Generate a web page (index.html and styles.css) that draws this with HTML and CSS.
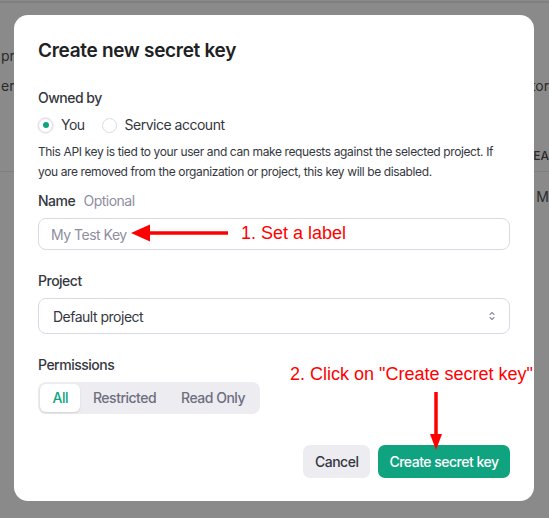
FILE: index.html
```html
<!doctype html>
<html>
<head>
  <title>Create new secret key</title>
  <link rel="stylesheet" href="styles.css">
</head>
<body>
<div class="page">
	<div class="page-row row-1"><span class="cut-left">pr</span></div>
	<div class="page-row row-2"><span class="cut-left">er c</span><span class="cut-right">tor</span></div>
	<div class="page-row row-3"><span></span><span class="cut-right caps">EA</span></div>
	<div class="page-row row-4"><span></span><span class="cut-right">M</span></div>
</div>

<div class="modal">
	<h2 class="modal-title">Create new secret key</h2>

	<div class="field field-owner">
		<div class="label">Owned by</div>
		<div class="radios">
			<label class="radio"><span class="dot checked"></span>You</label>
			<label class="radio"><span class="dot"></span>Service account</label>
		</div>
		<p class="hint">This API key is tied to your user and can make requests against the selected project. If you are removed from the organization or project, this key will be disabled.</p>
	</div>

	<div class="field">
		<div class="label">Name <span class="optional">Optional</span></div>
		<div class="input placeholder">My Test Key</div>
	</div>

	<div class="field">
		<div class="label">Project</div>
		<div class="input select">
			<span>Default project</span>
			<svg width="8" height="12" viewBox="0 0 8 12"><path d="M2 4.5 L4 2.5 L6 4.5 M2 7.5 L4 9.5 L6 7.5" fill="none" stroke="#8e8ea0" stroke-width="1.1" stroke-linecap="round" stroke-linejoin="round"/></svg>
		</div>
	</div>

	<div class="field">
		<div class="label">Permissions</div>
		<div class="segments">
			<span class="seg active">All</span>
			<span class="seg">Restricted</span>
			<span class="seg">Read Only</span>
		</div>
	</div>

	<div class="actions">
		<button class="btn btn-cancel">Cancel</button>
		<button class="btn btn-primary">Create secret key</button>
	</div>

	<!-- annotations -->
	<svg class="arrow-left" width="98" height="20" viewBox="0 0 98 20"><path d="M16 10 H97" stroke="#ff0000" stroke-width="3.5"/><path d="M0 10 L19 1.5 L19 18.5 Z" fill="#ff0000"/></svg>
	<div class="note note-1">1. Set a label</div>
	<div class="note note-2">2. Click on "Create secret key"</div>
	<svg class="arrow-down" width="14" height="58" viewBox="0 0 14 58"><path d="M7 0 V46" stroke="#ff0000" stroke-width="3.5"/><path d="M7 58 L1 42 L13 42 Z" fill="#ff0000"/></svg>
</div>
</body>
</html>
```

FILE: styles.css
```css
*,
*:before,
*:after {
	box-sizing: border-box;
}

body {
	margin: 0;
	background-color: #8a8a8a;
	font-family: "Inter", "Noto Sans", sans-serif;
	color: #202123;
	height: 518px;
	overflow: hidden;
	position: relative;
}

/* dimmed page behind the dialog */
.page {
	border-top: 2px solid #7f7f7f;
	margin-top: 1px;
	font-size: 14px;
	line-height: 24px;
	color: #2b2b2b;
}
.page-row {
	display: flex;
	justify-content: space-between;
	height: 24px;
}
.row-1 { margin-top: 41px; }
.row-2 { margin-top: 6px; }
.row-3 {
	margin-top: 46px;
	padding-bottom: 3px;
	border-bottom: 1px solid #7f7f7f;
	box-sizing: content-box;
}
.row-4 { margin-top: 13px; }
.cut-left { margin-left: 1px; }
.caps { font-size: 12px; font-weight: 500; }

/* dialog */
.modal {
	position: absolute;
	left: 14px;
	top: 15px;
	width: 520px;
	height: 486px;
	background: #fff;
	border-radius: 14px;
	padding: 24px 24px 0 24px;
}

.modal-title {
	margin: 0 0 25px 0;
	font-size: 19px;
	line-height: 24px;
	font-weight: 600;
	letter-spacing: -0.3px;
	color: #202123;
}

.field {
	margin-bottom: 21px;
}
.field-owner {
	margin-bottom: 9px;
}

.label {
	font-size: 14px;
	line-height: 20px;
	font-weight: 500;
	letter-spacing: -0.5px;
	color: #353740;
	margin-bottom: 7px;
}
.optional {
	font-weight: 400;
	color: #8e8ea0;
	margin-left: 5px;
}

.radios {
	display: flex;
	gap: 17px;
	font-size: 14px;
	letter-spacing: -0.5px;
	color: #353740;
	line-height: 18px;
	margin-top: 8px;
}
.radio {
	display: flex;
	align-items: center;
	gap: 8px;
}
.dot {
	width: 15px;
	height: 15px;
	border-radius: 50%;
	border: 1px solid #d9d9e3;
	display: inline-flex;
	align-items: center;
	justify-content: center;
}
.dot.checked {
	box-shadow: 0 0 0 1px #eef0f3;
}
.dot.checked:after {
	content: "";
	width: 6px;
	height: 6px;
	border-radius: 50%;
	background: #10a37f;
}

.hint {
	margin: 8px 0 0 0;
	font-size: 12px;
	line-height: 20px;
	color: #353740;
	letter-spacing: -0.38px;
}

.input {
	height: 32px;
	border: 1px solid #d9d9e3;
	border-radius: 8px;
	padding: 0 12px;
	display: flex;
	align-items: center;
	font-size: 14px;
	letter-spacing: -0.5px;
}
.placeholder {
	color: #8e8ea0;
}
.select {
	height: 36px;
	justify-content: space-between;
	padding: 0 13px 0 14px;
	color: #353740;
}

.segments {
	display: inline-flex;
	background: #ececf1;
	border-radius: 8px;
	padding: 2px;
	font-size: 14px;
	font-weight: 500;
	letter-spacing: -0.5px;
	color: #6e6e80;
}
.seg {
	padding: 0 12.5px;
	height: 28px;
	line-height: 28px;
}
.seg.active {
	background: #fff;
	color: #10a37f;
	border-radius: 6px;
	box-shadow: 0 1px 2px rgba(0,0,0,0.12);
}

.actions {
	display: flex;
	justify-content: flex-end;
	gap: 8px;
	margin-top: 31px;
}
.btn {
	height: 33px;
	border: none;
	border-radius: 7px;
	font-family: inherit;
	font-size: 14px;
	font-weight: 500;
	letter-spacing: -0.5px;
	padding: 0 11.5px;
}
.btn-cancel {
	background: #ececf1;
	color: #353740;
}
.btn-primary {
	background: #10a37f;
	color: #fff;
	padding: 0 11.5px;
}

.note {
	position: absolute;
	font-family: "Liberation Sans", Arial, sans-serif;
	font-size: 18px;
	line-height: 20px;
	color: #ff0000;
	white-space: nowrap;
}
.note-1 { left: 227px; top: 208px; }
.note-2 { left: 276px; top: 349px; }
.arrow-left {
	position: absolute;
	left: 117px;
	top: 208px;
}
.arrow-down {
	position: absolute;
	left: 415px;
	top: 377px;
}
```
